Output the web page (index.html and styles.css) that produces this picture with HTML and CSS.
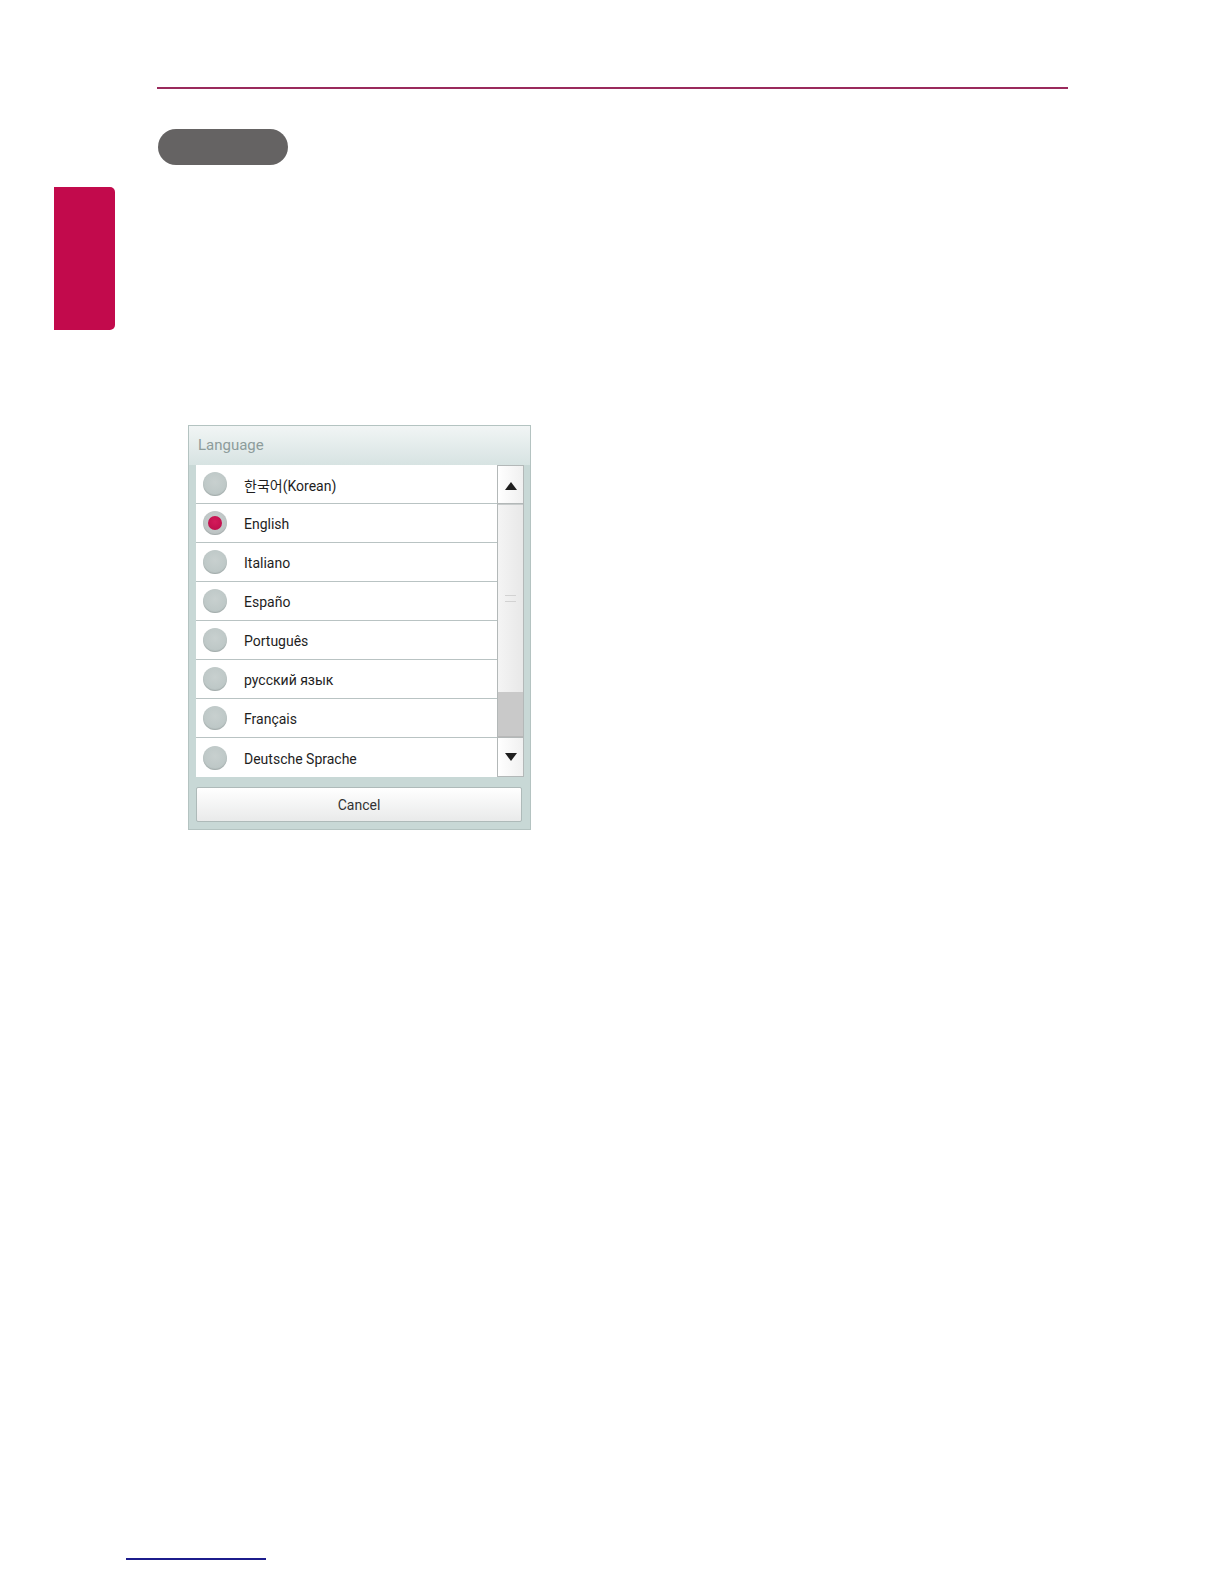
FILE: index.html
```html
<!DOCTYPE html>
<html lang="en">
<head>
<meta charset="utf-8">
<title>Language</title>
<link rel="stylesheet" href="styles.css">
</head>
<body>
<div class="page">
  <div class="top-rule"></div>
  <div class="pill"></div>
  <div class="side-tab"></div>

  <div class="dialog">
    <div class="dialog-title">Language</div>
    <div class="list-wrap">
      <ul class="list">
        <li class="row"><span class="radio"></span><span class="label ko">한국어(Korean)</span></li>
        <li class="row"><span class="radio on"></span><span class="label">English</span></li>
        <li class="row"><span class="radio"></span><span class="label">Italiano</span></li>
        <li class="row"><span class="radio"></span><span class="label">Españo</span></li>
        <li class="row"><span class="radio"></span><span class="label">Português</span></li>
        <li class="row"><span class="radio"></span><span class="label">русский язык</span></li>
        <li class="row"><span class="radio"></span><span class="label">Français</span></li>
        <li class="row"><span class="radio"></span><span class="label">Deutsche Sprache</span></li>
      </ul>
      <div class="scrollbar">
        <div class="sb-btn"><span class="tri up"></span></div>
        <div class="sb-track">
          <div class="sb-light"><span class="grip"></span></div>
          <div class="sb-dark"></div>
        </div>
        <div class="sb-btn down"><span class="tri dn"></span></div>
      </div>
    </div>
    <div class="btn-cancel">Cancel</div>
  </div>

  <div class="bottom-rule"></div>
</div>
</body>
</html>
```
FILE: styles.css
```css
html, body {
  margin: 0;
  padding: 0;
  background: #ffffff;
  overflow: hidden;
}
.page {
  width: 1224px;
  display: flex;
  flex-direction: column;
  font-family: "Roboto", "Liberation Sans", "Noto Sans CJK KR", sans-serif;
}
.top-rule {
  margin-top: 87px;
  margin-left: 157px;
  width: 911px;
  height: 0;
  border-bottom: 2px solid #9a2a5c;
}
.pill {
  margin-top: 40px;
  margin-left: 158px;
  width: 130px;
  height: 36px;
  border-radius: 18px;
  background: #656363;
}
.side-tab {
  margin-top: 22px;
  margin-left: 54px;
  width: 61px;
  height: 143px;
  background: #c20a4c;
  border-radius: 0 5px 5px 0;
}
.dialog {
  margin-top: 95px;
  margin-left: 188px;
  width: 341px;
  height: 403px;
  border: 1px solid #b4c3c1;
  background: #c8d8d6;
  display: flex;
  flex-direction: column;
}
.dialog-title {
  height: 39px;
  padding-left: 9px;
  background: linear-gradient(#f1f5f5, #d7e3e2);
  color: #8d9c9b;
  font-size: 15px;
  line-height: 38px;
}
.list-wrap {
  margin-left: 7px;
  margin-right: 6px;
  height: 312px;
  display: flex;
}
.list {
  list-style: none;
  margin: 0;
  padding: 0;
  width: 301px;
  background: #ffffff;
}
.row {
  height: 38px;
  border-bottom: 1px solid #b9c3c3;
  display: flex;
  align-items: center;
  padding-left: 7px;
}
.row:last-child {
  height: 39px;
  border-bottom: none;
}
.radio {
  width: 24px;
  height: 24px;
  border-radius: 50%;
  background: radial-gradient(circle at 50% 42%, #c8d0cf 0%, #bec8c7 62%, #a8b3b2 100%);
  box-shadow: inset 0 -1px 1px rgba(120,130,130,0.35);
  flex: none;
  position: relative;
}
.radio.on {
  background: radial-gradient(circle at 50% 42%, #cbd1d1 0%, #bcc3c3 70%, #9ea6a6 100%);
}
.radio.on::after {
  content: "";
  position: absolute;
  left: 5px;
  top: 5px;
  width: 14px;
  height: 14px;
  border-radius: 50%;
  background: radial-gradient(circle at 50% 40%, #d41a5a 0%, #b80c48 100%);
}
.label {
  margin-left: 17px;
  font-size: 14px;
  color: #1e1e1e;
  padding-top: 2px;
}
.label.ko {
  font-family: "Roboto", "Noto Sans CJK KR", sans-serif;
}
.scrollbar {
  width: 27px;
  display: flex;
  flex-direction: column;
  background: #ffffff;
}
.sb-btn {
  height: 39px;
  box-sizing: border-box;
  border: 1px solid #b3b8b8;
  background: linear-gradient(90deg, #ffffff, #f0f0f0);
  display: flex;
  align-items: center;
  justify-content: center;
}
.sb-btn.down {
  height: 40px;
}
.tri {
  width: 0;
  height: 0;
  border-left: 6px solid transparent;
  border-right: 6px solid transparent;
}
.tri.up {
  border-bottom: 8px solid #1e1e1e;
  margin-top: 2px;
}
.tri.dn {
  border-top: 8px solid #1e1e1e;
}
.sb-track {
  flex: 1;
  display: flex;
  flex-direction: column;
  border-left: 1px solid #b3b8b8;
  border-right: 1px solid #b3b8b8;
}
.sb-light {
  height: 187px;
  background: linear-gradient(90deg, #f4f4f4, #e8e8e8);
  display: flex;
  align-items: center;
  justify-content: center;
  border-top: 1px solid #c8cccc;
}
.grip {
  width: 11px;
  height: 5px;
  border-top: 1px solid #d2d2d2;
  border-bottom: 1px solid #d2d2d2;
}
.sb-dark {
  flex: 1;
  background: #c9c9c9;
  border-bottom: 1px solid #b8b8b8;
}
.btn-cancel {
  margin-top: 10px;
  margin-left: 7px;
  width: 324px;
  height: 33px;
  border: 1px solid #aebab9;
  border-radius: 2px;
  background: linear-gradient(#ffffff, #e9eaea);
  color: #333333;
  font-size: 14px;
  line-height: 35px;
  text-align: center;
}
.bottom-rule {
  margin-top: 728px;
  margin-left: 126px;
  width: 140px;
  height: 0;
  border-bottom: 2px solid #1c1c8c;
}
```
